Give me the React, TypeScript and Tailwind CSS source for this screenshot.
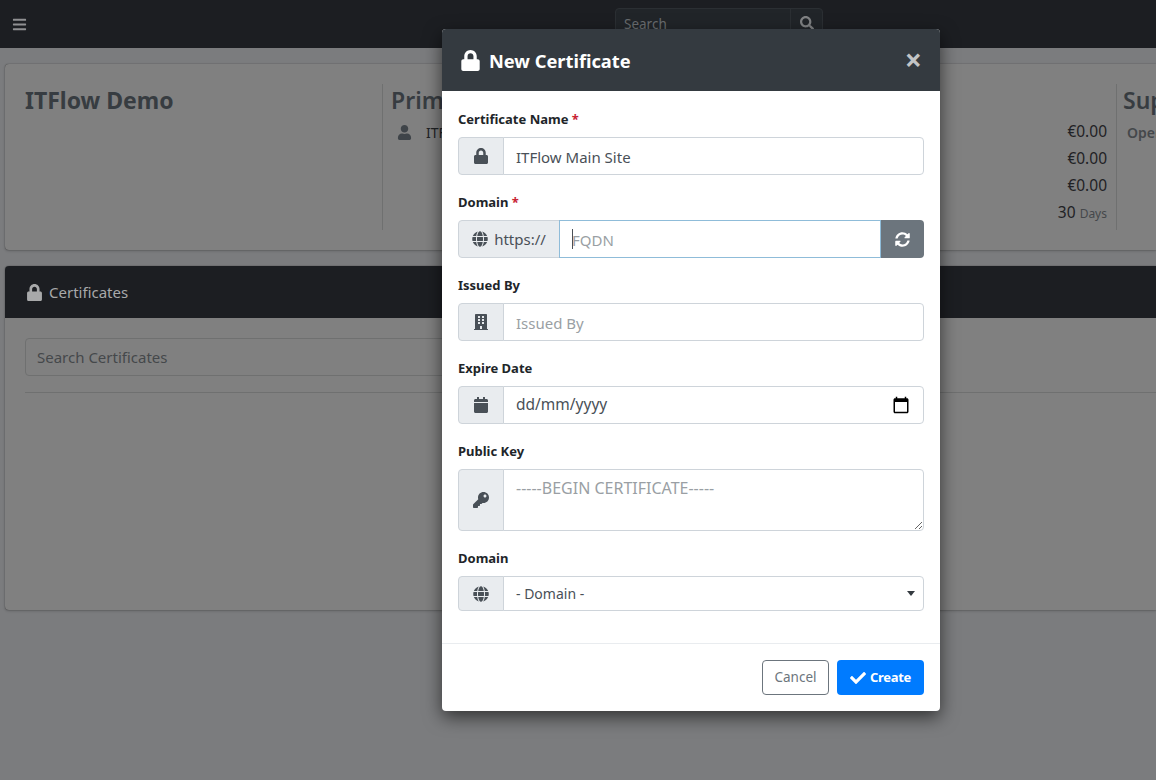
import { FaBars, FaBuilding, FaCalendar, FaCheck, FaGlobe, FaKey, FaLock, FaSearch, FaSyncAlt, FaUser } from "react-icons/fa";
import type { ReactNode } from "react";

function Field({ label, required, children }: { label: string; required?: boolean; children: ReactNode }) {
  return (
    <div className="mb-4">
      <label className="block pt-px mb-[7px] text-[13px] leading-[21px] font-bold text-[#212529]">
        {label} {required && <span className="text-[#c82333]">*</span>}
      </label>
      {children}
    </div>
  );
}

function Prepend({ children, wide }: { children: ReactNode; wide?: boolean }) {
  return (
    <div
      className={`${
        wide ? "w-[102px] gap-[6px]" : "w-[46px]"
      } shrink-0 flex items-center justify-center bg-[#e9ecef] border border-[#ced4da] rounded-l text-[#495057] text-[15px]`}
    >
      {children}
    </div>
  );
}

const inputClass =
  "flex-1 min-w-0 h-full pl-3 pr-3 -ml-px bg-white border border-[#ced4da] rounded-r text-[#495057] placeholder:text-[#9a9fa4] outline-none";

export default function App() {
  return (
    <div className="relative h-[780px] w-[1156px] overflow-hidden bg-[#7b7c7e] font-['Noto_Sans','Open_Sans',sans-serif]">
      {/* page behind the modal, colours already dimmed by the backdrop */}
      <nav className="h-12 bg-[#1c1e22] flex items-center">
        <FaBars className="ml-[12px] text-[15px] text-[#8f9092]" />
        <div className="ml-[588px] mb-[2px] flex h-[31px] w-[208px] rounded border border-[#2b2f33] bg-[#212529]">
          <span className="flex-1 pl-2 text-[13.5px] leading-[31px] text-[#6a6d70]">Search</span>
          <span className="w-8 flex items-center justify-center border-l border-[#2b2f33]">
            <FaSearch className="text-[14px] text-[#808284]" />
          </span>
        </div>
      </nav>

      <main className="pt-4 pl-[5px]">
        <section className="h-[186px] flex py-5 pl-5 rounded-l bg-[#808080] shadow-[0_0_1px_rgba(0,0,0,0.6),0_1px_3px_rgba(0,0,0,0.2)] text-[#1f2225]">
          <div className="w-[358px] shrink-0 border-r border-[#6f7070]">
            <h3 className="text-[23px] leading-[32px] font-bold text-[#373c41]">ITFlow Demo</h3>
          </div>
          <div className="w-[150px] shrink-0 pl-2">
            <h3 className="text-[23px] leading-[32px] font-semibold text-[#373c41] whitespace-nowrap">Primary</h3>
            <div className="mt-[6px] pl-[6px] flex items-center gap-[14px] text-[14px]">
              <FaUser className="text-[15px] text-[#3f4449]" />
              <span>ITFlow</span>
            </div>
          </div>
          <div className="w-[584px] shrink-0 border-r border-[#6f7070] pr-[9px] pt-[34px] flex flex-col items-end text-[15.5px] leading-[27px]">
            <span>€0.00</span>
            <span>€0.00</span>
            <span>€0.00</span>
            <span>
              30 <span className="text-[12px] text-[#45484b]">Days</span>
            </span>
          </div>
          <div className="shrink-0 pl-[6px] whitespace-nowrap">
            <h3 className="text-[23px] leading-[32px] font-semibold text-[#373c41]">Support</h3>
            <div className="mt-[6px] pl-[4px] text-[14px] font-semibold text-[#45484b]">Open Tickets</div>
          </div>
        </section>

        <section className="mt-4 h-[344px] rounded-l bg-[#808080] shadow-[0_0_1px_rgba(0,0,0,0.6),0_1px_3px_rgba(0,0,0,0.2)]">
          <header className="h-[52px] pl-[21px] flex items-center gap-[6px] rounded-tl bg-[#1c1e22] text-[#a8a9aa] text-[15px]">
            <FaLock className="text-[17px]" />
            <span>Certificates</span>
          </header>
          <div className="pt-5 pl-5">
            <input
              placeholder="Search Certificates"
              className="block h-[38px] w-[500px] px-[11px] rounded border border-[#6f7070] bg-[#808080] text-[15px] placeholder:text-[#45484b] outline-none"
            />
            <hr className="mt-4 border-t border-[#6f7070]" />
          </div>
        </section>
      </main>

      {/* modal */}
      <div className="absolute left-[442px] top-[29px] w-[498px] h-[682px] rounded bg-white shadow-[0_6px_18px_rgba(0,0,0,0.6)] flex flex-col">
        <div className="h-[62px] shrink-0 pl-[18px] pr-[18px] flex items-center justify-between rounded-t bg-[#343a40] text-white">
          <div className="flex items-center gap-[8px] text-[18.25px] font-bold">
            <FaLock className="text-[21px]" />
            <span className="pt-px">New Certificate</span>
          </div>
          <span className="text-[30px] font-bold leading-none text-[#c2c4c6]">×</span>
        </div>

        <div className="flex-1 p-4 pt-[17px]">
          <Field label="Certificate Name" required>
            <div className="flex h-[38px]">
              <Prepend><FaLock className="text-[16px]" /></Prepend>
              <input className={`${inputClass} pt-px text-[15px]`} defaultValue="ITFlow Main Site" />
            </div>
          </Field>
          <Field label="Domain" required>
            <div className="relative flex h-[38px]">
              <Prepend wide><FaGlobe className="text-[16px]" /><span>https://</span></Prepend>
              <input
                className="flex-1 min-w-0 h-full pl-3 pt-px -ml-px bg-white border border-[#8fbcd9] text-[15px] placeholder:text-[#9a9fa4] outline-none"
                placeholder="FQDN"
              />
              <span className="absolute left-[114px] top-[9px] h-[20px] w-px bg-[#495057]" />
              <button className="w-[43px] flex items-center justify-center rounded-r bg-[#6c757d] text-white">
                <FaSyncAlt className="text-[15px]" />
              </button>
            </div>
          </Field>
          <Field label="Issued By">
            <div className="flex h-[38px]">
              <Prepend><FaBuilding className="text-[16px]" /></Prepend>
              <input className={`${inputClass} pt-px text-[15px]`} placeholder="Issued By" />
            </div>
          </Field>
          <Field label="Expire Date">
            <div className="flex h-[38px]">
              <Prepend><FaCalendar className="text-[16px]" /></Prepend>
              <div className={`${inputClass} flex items-center justify-between pr-[13px] text-[15.5px]`}>
                <span>dd/mm/yyyy</span>
                <svg viewBox="0 0 24 24" className="w-[18px] h-[18px] text-black" fill="currentColor">
                  <path d="M20 3h-1V1h-2v2H7V1H5v2H4c-1.1 0-2 .9-2 2v16c0 1.1.9 2 2 2h16c1.1 0 2-.9 2-2V5c0-1.1-.9-2-2-2zm0 18H4V8h16v13z" />
                </svg>
              </div>
            </div>
          </Field>
          <Field label="Public Key">
            <div className="flex h-[62px]">
              <Prepend><FaKey className="text-[16px]" /></Prepend>
              <textarea className={`${inputClass} py-[6px] text-[16px] leading-6`} placeholder="-----BEGIN CERTIFICATE-----" />
            </div>
          </Field>
          <Field label="Domain">
            <div className="flex h-[35px]">
              <Prepend><FaGlobe className="text-[16px]" /></Prepend>
              <div className="relative flex-1 -ml-px flex items-center pl-3 pr-3 bg-white border border-[#ced4da] rounded-r text-[14px] text-[#495057]">
                <span>- Domain -</span>
                <span className="absolute right-[8px] top-[14px] border-x-[4px] border-t-[5px] border-x-transparent border-t-[#343a40]" />
              </div>
            </div>
          </Field>
        </div>

        <div className="h-[68px] shrink-0 pr-4 flex items-center justify-end gap-2 border-t border-[#e9ecef]">
          <button className="h-[35px] w-[67px] rounded border border-[#6c757d] text-[13.5px] text-[#6c757d]">Cancel</button>
          <button className="h-[35px] w-[87px] flex items-center justify-center gap-[4px] rounded bg-[#007bff] text-[13px] font-bold tracking-tight text-white">
            <FaCheck className="text-[16px]" />
            <span>Create</span>
          </button>
        </div>
      </div>
    </div>
  );
}
